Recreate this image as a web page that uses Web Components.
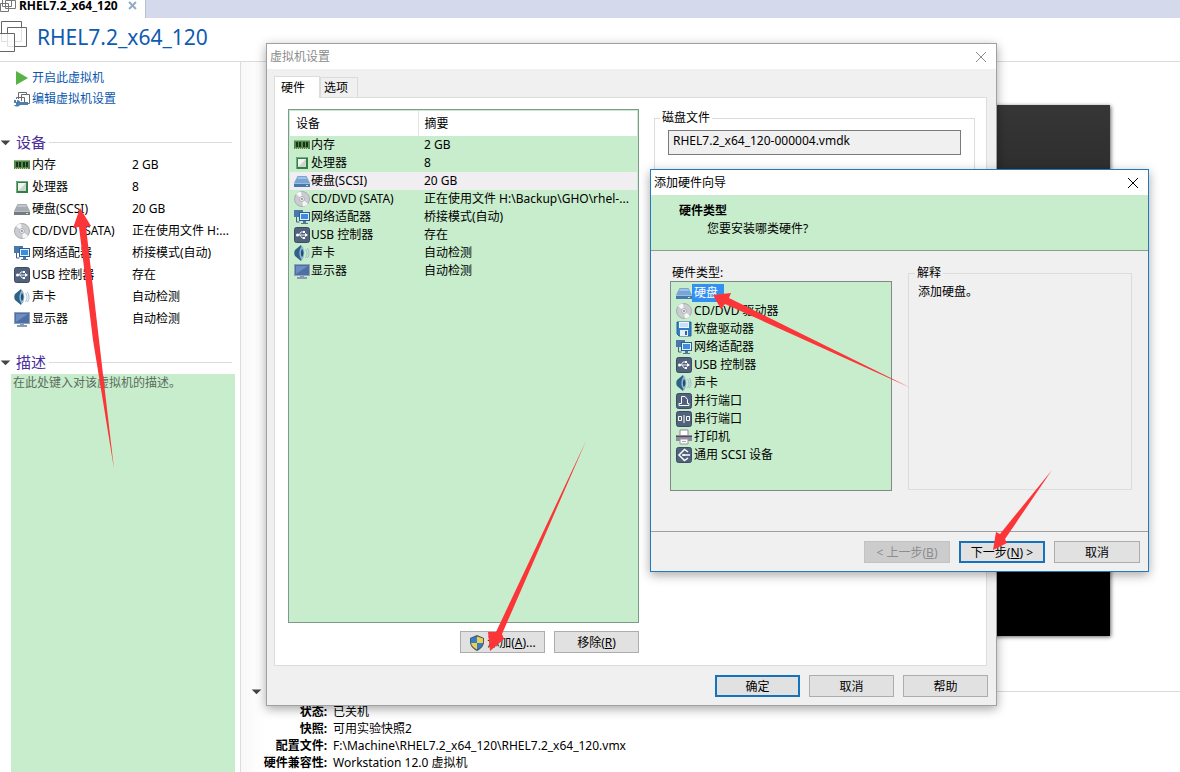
<!DOCTYPE html>
<html lang="zh-CN">
<head>
<meta charset="utf-8">
<title>RHEL7.2_x64_120</title>
<style>
  html, body { margin: 0; min-height: 100%; background: #fff; }
  body { font: 12px/18px "Noto Sans", "Noto Sans CJK SC", sans-serif; color: #000; }
</style>
</head>
<body>
<vm-workspace></vm-workspace>

<script>
const BASE = `
  *, *::before, *::after { box-sizing: border-box; }
  :host([hidden]) { display: none; }
  button, input, textarea { font: inherit; color: inherit; margin: 0; border-radius: 0; }
  table { border-collapse: collapse; }
  th { font-weight: normal; text-align: left; }
`;

function define(name, css, html, setup) {
  const template = document.createElement('template');
  template.innerHTML = `<style>${BASE}${css}</style>${html}`;
  customElements.define(name, class extends HTMLElement {
    constructor() {
      super();
      this.attachShadow({ mode: 'open' }).append(template.content.cloneNode(true));
    }
    connectedCallback() { if (setup) setup(this, this.shadowRoot); }
  });
}

const tile = '<rect x=".5" y=".5" width="15" height="15" rx="2" fill="#51637c" stroke="#3d4c62"/>';
const drive = (top, front) => `<path d="M3.5 3h9L16 10H0z" fill="${top}"/><path d="M4 4h8l1 2H3z" fill="#fff" opacity=".3"/><path d="M0 10h16v4H0z" fill="${front}"/><path d="M0 10.500h16" stroke="#fff" opacity=".5"/><path d="M12 12.500h2" stroke="#cfe8c8"/>`;
const ICONS = {
  memory: '<path d="M0 3h16v9H0z" fill="#4f8a4a"/><path d="M0 3.500h16" stroke="#8db886"/><path d="M2 5h2v5H2zM5 5h2v5H5zM9 5h2v5H9zM12 5h2v5h-2z" fill="#1e2f1e"/><path d="M1 11.500h14" stroke="#c7cf8d" stroke-dasharray="1 1"/>',
  cpu: '<rect x="2" y="2" width="12" height="12" fill="#2f8146"/><path d="M2.500 14V2.500H14" fill="none" stroke="#72ad7d"/><rect x="4" y="4" width="8" height="8" fill="#f1f4f1"/><path d="M12 4v8H4z" fill="#cdd4ce"/>',
  disk: drive('#a6abb1', '#747b84'),
  diskblue: drive('#78a6d4', '#4679b0'),
  cd: '<circle cx="8" cy="8" r="7.500" fill="#c9ccd0" stroke="#aaadb2"/><path d="M8 8L2 3a8 8 0 0 1 5-2.500zM8 8l6 5a8 8 0 0 1-5 2.500z" fill="#f7f7f8"/><circle cx="8" cy="8" r="2.500" fill="#eee" stroke="#b0b3b8"/><circle cx="8" cy="8" r="1" fill="#888"/>',
  net: '<rect x="0" y="1" width="9" height="7" fill="#4b78a8"/><path d="M2.500 8v5h3" fill="none" stroke="#44607c"/><rect x="5" y="3" width="11" height="9" fill="#2c5c92"/><rect x="6" y="4" width="9" height="7" fill="#e4f1fc"/><rect x="7" y="5" width="7" height="5" fill="#3a8ee0"/><path d="M9 12h3v2H9zM7 14h7v1H7z" fill="#567592"/>',
  usb: tile + '<path d="M3 8h10M5 8l2-3h3M6 8l2 3h2" fill="none" stroke="#e8edf4"/><circle cx="3.500" cy="8" r="1.500" fill="#fff"/><path d="M11 6l3 2-3 2zM9 4h2v2H9zM9 10h2v2H9z" fill="#fff"/>',
  sound: '<path d="M1 5l6-5c2 3 2 13 0 16l-6-5c-1-2-1-4 0-6z" fill="#2e6187"/><path d="M8 1c-3 3-4 10 0 14 3-3 3-11 0-14z" fill="#8fb8d2"/><path d="M8 4c-2 3-1 7 0 8 2-2 2-6 0-8z" fill="#264f70"/><path d="M11.500 4c2 3 2 6 0 9M13.500 3c2 4 2 7 0 10" fill="none" stroke="#9db9ce"/>',
  display: '<rect x=".5" y="1.500" width="15" height="11" fill="#4e6fa4" stroke="#8fa3bd"/><path d="M2 3h12L2 11z" fill="#6c8dc0"/><path d="M6 13h4v1H6zM3 14h10v2H3z" fill="#879cb3"/>',
  floppy: '<path d="M1 1h14v14H3l-2-2z" fill="#337cc6" stroke="#26609e"/><path d="M3 1h10v6H3z" fill="#eef6ff"/><path d="M4 3h8M4 5h8" stroke="#a6c8e8"/><path d="M4 9h8v6H4z" fill="#e6edf5"/><path d="M9 10h2v4H9z" fill="#2c6aac"/>',
  parallel: tile + '<path d="M5.500 3.500h3.500l2.500 3v4h1.500v2H3v-2h2.500z" fill="none" stroke="#fff"/>',
  serial: tile + '<path d="M2.500 5.500h3v4h-3zM8 4v8M10.500 5.500h3v4h-3z" fill="none" stroke="#fff"/>',
  printer: '<path d="M4 1h8v6H4z" fill="#fff" stroke="#8b8b98"/><path d="M0 6h16v6H0z" fill="#8e8c9a"/><path d="M0 7.500h16" stroke="#504e5a"/><path d="M4 10h8v5H4z" fill="#fafafa" stroke="#9a98a8"/><path d="M6 12.500h4" stroke="#aaa"/>',
  scsi: tile + '<path d="M12 5L8.500 2.500 3 8l5.500 5.500L12 11M6 8h8" fill="none" stroke="#fff" stroke-width="1.500"/><circle cx="8" cy="8" r="1" fill="#fff"/>',
  shield: '<path d="M8 0l7 3v4c0 4-3 7-7 9-4-2-7-5-7-9V3z" fill="#4c5964"/><path d="M8 1.500V8H2V3.500z" fill="#2f7fd3"/><path d="M8 1.500V8h6V3.500z" fill="#f5ce45"/><path d="M2 8h6v6.500C5 13 2.500 11 2 8z" fill="#f5ce45"/><path d="M14 8H8v6.500C11 13 13.500 11 14 8z" fill="#2f7fd3"/>',
  play: '<path d="M2 1l12 7-12 7z" fill="#58b347"/>',
  edit: '<path d="M4.500 8V1.500h8v2M7.500 10V3.500h8v9h-3M2.500 8V6.500h8V11" fill="none" stroke="#686c72"/><path d="M0 9h2v2h1V9c2 0 3 1 3 2h8v3H6c-1 2-5 2-6 0h2v-2H0z" fill="#4f7fae"/>',
  vm: '<path d="M2.500 1.500h9v9h-9zM5.500 4.500h10v8h-10zM.500 7.500h8v8h-8z" fill="none" stroke="#777"/>',
  vmlarge: '<path d="M1.500 .500h20v20h-20z" fill="#fff" stroke="#666"/><path d="M7.500 6.500h19v19h-19z" fill="#fff" fill-opacity=".8" stroke="#666"/><path d="M-5 12.500h19.500v18H-5z" fill="#fff" fill-opacity=".8" stroke="#666"/>',
  close: '<path d="M3 3l10 10M13 3L3 13" fill="none" stroke="currentColor"/>',
  closebold: '<path d="M3 3l10 10M13 3L3 13" fill="none" stroke="#93abc5" stroke-width="3"/>',
  caret: '<path d="M1 5h14l-7 7z" fill="#444"/>'
};

define('vm-icon',
  `:host { display: inline-block; width: 16px; height: 16px; flex: none; vertical-align: top; }
   svg { display: block; width: 100%; height: 100%; }`,
  '<svg viewBox="0 0 16 16" aria-hidden="true"></svg>',
  (el, root) => {
    const svg = root.querySelector('svg');
    if (el.hasAttribute('box')) svg.setAttribute('viewBox', el.getAttribute('box'));
    svg.innerHTML = ICONS[el.getAttribute('name')];
  });

define('push-button',
  `:host { display: block; width: 86px; }
   button { display: flex; align-items: center; justify-content: center; width: 100%; height: 22px;
     padding: 1px 0 0; background: #e1e1e1; border: 1px solid #adadad; white-space: nowrap; }
   :host([primary]) button { border: 2px solid #1673bb; }
   :host([disabled]) button { background: #ccc; border-color: #c2c2c2; color: #8d8d8d; }`,
  '<button type="button"><slot></slot></button>',
  (el, root) => { root.querySelector('button').disabled = el.hasAttribute('disabled'); });

define('dialog-window',
  `:host { display: flex; flex-direction: column; background: #f0f0f0; border: 1px solid #a0a0a0;
     box-shadow: 0 3px 10px rgba(0,0,0,.35); }
   header { display: flex; align-items: center; height: 25px; flex: none; background: #fff; padding: 0 7px 0 3px; }
   h2 { flex: 1; margin: 0; font-size: 12px; font-weight: normal; color: var(--title, #000); }
   button { display: flex; padding: 0; border: 0; background: none; color: var(--title, #000); }
   .body { flex: 1; display: flex; flex-direction: column; min-height: 0; }`,
  `<header><h2></h2><button type="button" aria-label="关闭"><vm-icon name="close"></vm-icon></button></header>
   <div class="body"><slot></slot></div>`,
  (el, root) => { root.querySelector('h2').textContent = el.getAttribute('heading'); });

define('group-box',
  `:host { display: flex; }
   fieldset { flex: 1; min-width: 0; margin: 0; padding: var(--pad, 0 9px); border: 1px solid #dcdcdc; }
   legend { padding: 0 2px; margin-left: var(--legend-shift, 0); line-height: 18px; }`,
  '<fieldset><legend></legend><slot></slot></fieldset>',
  (el, root) => { root.querySelector('legend').textContent = el.getAttribute('label'); });

define('section-title',
  `:host { display: flex; align-items: center; gap: 5px; height: 20px; }
   vm-icon { width: 11px; height: 11px; }
   h3 { margin: 0; font-size: 15px; line-height: 20px; font-weight: normal; color: #4a2f9c; }
   hr { flex: 1; margin: 0 0 0 -2px; border: 0; border-top: 1px solid #dadada; }`,
  '<vm-icon name="caret"></vm-icon><h3><slot></slot></h3><hr>');

const DEVICES = [
  ['memory', '内存', '2 GB'], ['cpu', '处理器', '8'], ['disk', '硬盘(SCSI)', '20 GB'],
  ['cd', 'CD/DVD (SATA)', '正在使用文件 H:\\Backup\\GHO\\rhel-...'], ['net', '网络适配器', '桥接模式(自动)'],
  ['usb', 'USB 控制器', '存在'], ['sound', '声卡', '自动检测'], ['display', '显示器', '自动检测']
];

define('device-summary',
  `:host { display: block; }
   table { width: 100%; table-layout: fixed; }
   tr { height: 22px; }
   th, td { padding: 0; white-space: nowrap; }
   th { width: 118px; }
   .name { display: flex; align-items: center; gap: 2px; }`,
  '<table><tbody></tbody></table>',
  (el, root) => {
    root.querySelector('tbody').innerHTML = DEVICES.map(([icon, name, value]) =>
      `<tr><th scope="row"><span class="name"><vm-icon name="${icon}"></vm-icon>${name}</span></th><td>${icon === 'cd' ? '正在使用文件 H:...' : value}</td></tr>`).join('');
  });

define('device-table',
  `:host { display: block; border: 1px solid #7f9a8c; padding: 1px; background: #c7edcc; }
   table { width: 100%; table-layout: fixed; }
   thead tr { height: 25px; background: #fff; }
   tbody tr { height: 18px; }
   th, td { padding: 0 0 0 6px; white-space: nowrap; line-height: 18px; }
   thead th:first-child { width: 128px; border-right: 1px solid #e4e4e4; }
   tbody th { padding-left: 4px; }
   .name { display: flex; align-items: center; gap: 1px; }
   .selected { background: #f0eef0; }`,
  '<table><thead><tr><th scope="col">设备</th><th scope="col">摘要</th></tr></thead><tbody></tbody></table>',
  (el, root) => {
    root.querySelector('tbody').innerHTML = DEVICES.map(([icon, name, value]) =>
      `<tr${icon === 'disk' ? ' class="selected"' : ''}><th scope="row"><span class="name"><vm-icon name="${icon === 'disk' ? 'diskblue' : icon}"></vm-icon>${name}</span></th><td>${value}</td></tr>`).join('');
  });

define('hardware-list',
  `:host { display: block; border: 1px solid #7f8a84; background: #c7edcc; padding: 2px 5px; }
   ul { list-style: none; margin: 0; padding: 0; }
   li { display: flex; align-items: center; height: 18px; }
   span { padding: 0 6px 0 2px; line-height: 18px; }
   [aria-selected=true] span { background: #3390f0; color: #fff; }`,
  '<ul role="listbox" aria-label="硬件类型"></ul>',
  (el, root) => {
    const types = [['diskblue', '硬盘'], ['cd', 'CD/DVD 驱动器'], ['floppy', '软盘驱动器'], ['net', '网络适配器'],
      ['usb', 'USB 控制器'], ['sound', '声卡'], ['parallel', '并行端口'], ['serial', '串行端口'],
      ['printer', '打印机'], ['scsi', '通用 SCSI 设备']];
    root.querySelector('ul').innerHTML = types.map(([icon, name], i) =>
      `<li role="option" aria-selected="${i === 0}"><vm-icon name="${icon}"></vm-icon><span>${name}</span></li>`).join('');
  });

define('vm-sidebar',
  `:host { display: flex; flex-direction: column; width: 241px; flex: none; border-right: 1px solid #dcdcdc; padding-top: 6px; }
   nav { display: flex; flex-direction: column; gap: 1px; padding-left: 14px; margin-bottom: 23px; }
   a { display: flex; align-items: center; gap: 2px; height: 20px; color: #0a58ae; text-decoration: none; }
   section-title { padding-right: 8px; }
   device-summary { padding: 2px 8px 0 14px; margin-bottom: 22px; }
   textarea { flex: 1; min-height: 120px; margin: 2px 5px 0 11px; padding: 0 2px; border: 0; background: #c7edcc;
     color: #5c6b5e; resize: none; outline: 0; display: block; }`,
  `<nav><a href="#start"><vm-icon name="play"></vm-icon>开启此虚拟机</a>
    <a href="#edit"><vm-icon name="edit"></vm-icon>编辑虚拟机设置</a></nav>
   <section-title>设备</section-title><device-summary></device-summary>
   <section-title>描述</section-title>
   <textarea aria-label="描述">在此处键入对该虚拟机的描述。</textarea>`);

define('vm-details',
  `:host { flex: 1; min-width: 0; display: flex; flex-direction: column; padding-top: 43px;
     background: linear-gradient(90deg, #f8f8f8, #fff 24px); }
   .screen { flex: 1; min-height: 300px; margin: 0 70px 47px 459px; background: linear-gradient(#363636, #000 85%);
     box-shadow: 1px 1px 4px rgba(0,0,0,.6); }
   section-title { height: 16px; padding-left: 10px; margin-bottom: 4px; }
   dl { display: grid; grid-template-columns: 86px 1fr; column-gap: 6px; margin: 0 0 1px; line-height: 17px; }
   dt { font-weight: bold; text-align: right; white-space: nowrap; }
   dd { margin: 0; }`,
  `<div class="screen"></div>
   <section-title></section-title>
   <dl><dt>状态:</dt><dd>已关机</dd><dt>快照:</dt><dd>可用实验快照2</dd>
    <dt>配置文件:</dt><dd>F:\\Machine\\RHEL7.2_x64_120\\RHEL7.2_x64_120.vmx</dd>
    <dt>硬件兼容性:</dt><dd>Workstation 12.0 虚拟机</dd></dl>`);

define('settings-dialog',
  `:host { display: flex; --title: #8c8c8c; }
   dialog-window { flex: 1; }
   .tabs { display: flex; align-items: flex-end; padding: 6px 7px 0; height: 28px; }
   .tabs button { position: relative; height: 20px; padding: 0 9px 0 3px; border: 1px solid #dcdcdc; border-bottom: 0; background: #f0f0f0; }
   .tabs [aria-selected=true] { height: 22px; width: 46px; padding: 0 0 0 6px; text-align: left; background: #fff; z-index: 1; margin-bottom: -1px; }
   .pane { flex: 1; display: flex; gap: 15px; margin: 0 9px 0 7px; padding: 11px 11px 12px 13px; border: 1px solid #dcdcdc; background: #fff; }
   .left { width: 351px; display: flex; flex-direction: column; gap: 8px; }
   device-table { flex: 1; }
   push-button { width: 85px; }
   .row { display: flex; justify-content: flex-end; gap: 9px; }
   .row vm-icon { margin-right: 2px; }
   .right { flex: 1; min-width: 0; }
   group-box { height: 83px; --pad: 3px 13px; --legend-shift: -8px; }
   input { width: 100%; height: 25px; padding: 0 4px 4px; border: 1px solid #7a7a7a; background: #f0f0f0; display: block; }
   footer { display: flex; justify-content: flex-end; gap: 9px; padding: 9px 8px 8px; }`,
  `<dialog-window heading="虚拟机设置">
    <div class="tabs" role="tablist"><button type="button" role="tab" aria-selected="true">硬件</button><button type="button" role="tab">选项</button></div>
    <div class="pane">
      <div class="left"><device-table></device-table>
        <div class="row"><push-button><vm-icon name="shield"></vm-icon>添加(<u>A</u>)...</push-button><push-button>移除(<u>R</u>)</push-button></div></div>
      <div class="right"><group-box label="磁盘文件"><input aria-label="磁盘文件" readonly value="RHEL7.2_x64_120-000004.vmdk"></group-box></div>
    </div>
    <footer><push-button primary>确定</push-button><push-button>取消</push-button><push-button>帮助</push-button></footer>
  </dialog-window>`);

define('hardware-wizard',
  `:host { display: flex; }
   dialog-window { flex: 1; border-color: #2479bd; }
   .banner { height: 56px; flex: none; padding: 7px 28px; background: #c7edcc; border-bottom: 1px solid #8aa08e; }
   h3 { margin: 0; font-size: 12px; font-weight: bold; line-height: 18px; }
   p { margin: 0; }
   .banner p { padding-left: 28px; }
   .content { flex: 1; display: flex; gap: 16px; padding: 12px 16px 40px 19px; }
   .types { width: 222px; display: flex; flex-direction: column; }
   .types label { padding: 2px 2px 0; line-height: 16px; }
   hardware-list { flex: 1; }
   group-box { flex: 1; margin: 1px 0; --pad: 1px 9px; --legend-shift: -3px; }
   footer { display: flex; justify-content: flex-end; gap: 9px; padding: 9px 8px 8px; border-top: 1px solid #a0a0a0; }`,
  `<dialog-window heading="添加硬件向导">
    <div class="banner"><h3>硬件类型</h3><p>您要安装哪类硬件?</p></div>
    <div class="content">
      <div class="types"><label>硬件类型:</label><hardware-list></hardware-list></div>
      <group-box label="解释"><p>添加硬盘。</p></group-box>
    </div>
    <footer><push-button disabled>&lt; 上一步(<u>B</u>)</push-button><push-button primary>下一步(<u>N</u>) &gt;</push-button><push-button>取消</push-button></footer>
  </dialog-window>`);

define('arrow-layer',
  `:host { display: block; position: absolute; top: 0; left: 0; pointer-events: none; }
   svg { display: block; }`,
  `<svg width="920" height="660" viewBox="0 0 920 660" aria-hidden="true"><g fill="#fb3538">
    <path d="M80 208L91 226L86 227L99 340L114 469L93 340L79 227L73 228Z"/>
    <path d="M490 651L488 632L496 632L586 441L502 634L504 639Z"/>
    <path d="M713 295L731 293L729 298L911 388L725 304L721 309Z"/></g></svg>`);

define('arrow-next',
  `:host { display: block; position: absolute; pointer-events: none; }
   svg { display: block; }`,
  `<svg width="60" height="81" viewBox="0 0 60 81" aria-hidden="true"><path d="M1 80L4 62L8 64L60 0L13 69L15 73Z" fill="#fb3538"/></svg>`);

define('vm-workspace',
  `:host { display: flex; flex-direction: column; min-height: 100vh; position: relative; }
   .tabs { display: flex; height: 18px; flex: none; background: #d4daec; }
   .tab { display: flex; align-items: flex-start; gap: 3px; width: 146px; height: 18px; background: #fff; border-right: 1px solid #b8c0d8; font-weight: bold; line-height: 12px; }
   .tab .x { width: 11px; height: 11px; }
   .tab button { display: flex; padding: 0; border: 0; background: none; margin-left: 6px; }
   header { display: flex; align-items: center; gap: 8px; height: 44px; flex: none; border-bottom: 1px solid #dcdcdc; padding-bottom: 5px; }
   header vm-icon { width: 29px; height: 32px; }
   h1 { margin: 0; font-size: 21px; line-height: 30px; font-weight: normal; color: #0e5bb0; }
   main { flex: 1; display: flex; }
   settings-dialog { position: absolute; left: 266px; top: 43px; width: 731px; height: 663px; }
   hardware-wizard { position: absolute; left: 650px; top: 169px; width: 499px; height: 403px; }
   arrow-next { left: 992px; top: 470px; }`,
  `<div class="tabs"><div class="tab"><vm-icon name="vm" box="0 4 16 16"></vm-icon><span>RHEL7.2_x64_120</span><button type="button" aria-label="关闭标签"><vm-icon class="x" name="closebold"></vm-icon></button></div></div>
   <header><vm-icon name="vmlarge" box="0 0 29 32"></vm-icon><h1>RHEL7.2_x64_120</h1></header>
   <main><vm-sidebar></vm-sidebar><vm-details></vm-details></main>
   <settings-dialog></settings-dialog>
   <hardware-wizard></hardware-wizard>
   <arrow-layer></arrow-layer>
   <arrow-next></arrow-next>`);
</script>
</body>
</html>
